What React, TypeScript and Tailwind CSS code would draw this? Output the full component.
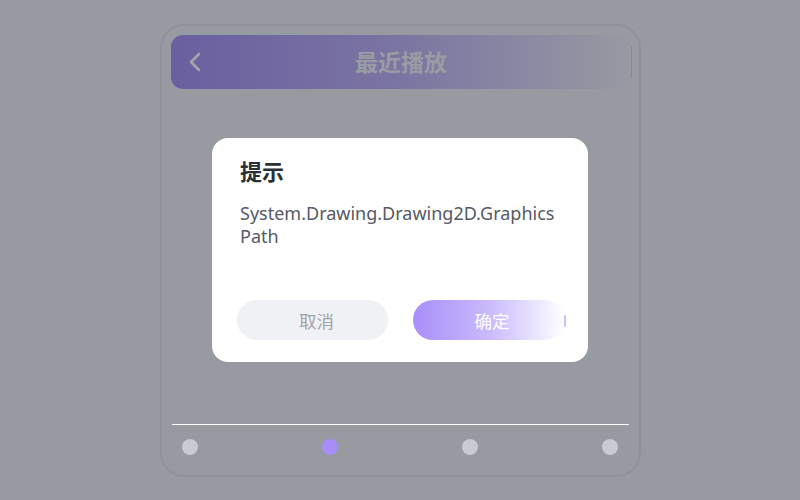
import React from 'react';

const dots = [false, true, false, false];

export default function App() {
  return (
    <div
      className="relative w-[800px] h-[500px] overflow-hidden bg-[#979aa1] pt-[24px]"
      style={{ fontFamily: '"Noto Sans", "Noto Sans CJK SC", sans-serif' }}
    >
      {/* phone frame under the overlay */}
      <div className="mx-auto flex h-[453px] w-[481px] flex-col rounded-[24px] border-2 border-[#8f9298] px-[9px] pt-[9px]">
        <div className="relative flex h-[54px] w-[461px] items-center rounded-[12px] bg-gradient-to-r from-[#6a5fa0] via-[#7b75a2] to-[#979aa1]">
          <svg className="ml-[17px] h-[22px] w-[14px]" viewBox="0 0 14 22" fill="none">
            <path d="M11 3 L3 11 L11 19" stroke="#a3a5ad" strokeWidth="2.6" strokeLinecap="round" strokeLinejoin="round" />
          </svg>
          <div className="absolute inset-0 flex items-center justify-center text-[23px] font-bold text-[#9a9ca4]">
            最近播放
          </div>
          <div className="absolute right-0 top-[11px] h-[32px] w-px bg-[#8783a8]" />
        </div>
        <div className="flex-1" />
        <div className="mx-[1px] h-px bg-white" />
        <div className="flex h-[44px] items-center justify-between px-[11px]">
          {dots.map((on, i) => (
            <div key={i} className={`h-4 w-4 rounded-full ${on ? 'bg-[#a68df8]' : 'bg-[#c8cbd2]'}`} />
          ))}
        </div>
        <div className="h-[6px]" />
      </div>

      {/* dialog */}
      <div className="absolute inset-0 flex items-center justify-center">
        <div className="flex h-[224px] w-[376px] flex-col rounded-[16px] bg-white">
          <div className="px-[28px] pt-[18px] text-[22px] font-bold leading-[30px] text-[#2a2e35]">提示</div>
          <div className="mt-[16px] w-[348px] px-[28px] text-[18px] leading-[23px] text-[#555a64]">
            System.Drawing.Drawing2D.Graphics<wbr />Path
          </div>
          <div className="flex-1" />
          <div className="flex gap-[25px] pb-[22px] pl-[25px]">
            <button className="h-[40px] w-[151px] rounded-full bg-[#f0f1f4] pl-[8px] pt-[3px] text-[17.5px] text-[#a0a3ab]">取消</button>
            <div className="relative">
              <button className="h-[40px] w-[152px] rounded-full bg-gradient-to-r from-[#a98ef9] via-[#c9bafc] to-[#ffffff] pl-[6px] pt-[3px] text-[17.5px] text-white">
                确定
              </button>
              <div className="absolute right-[-1px] top-[15px] h-[12px] w-[2px] rounded-full bg-[#cdbffb]" />
            </div>
          </div>
        </div>
      </div>
    </div>
  );
}
